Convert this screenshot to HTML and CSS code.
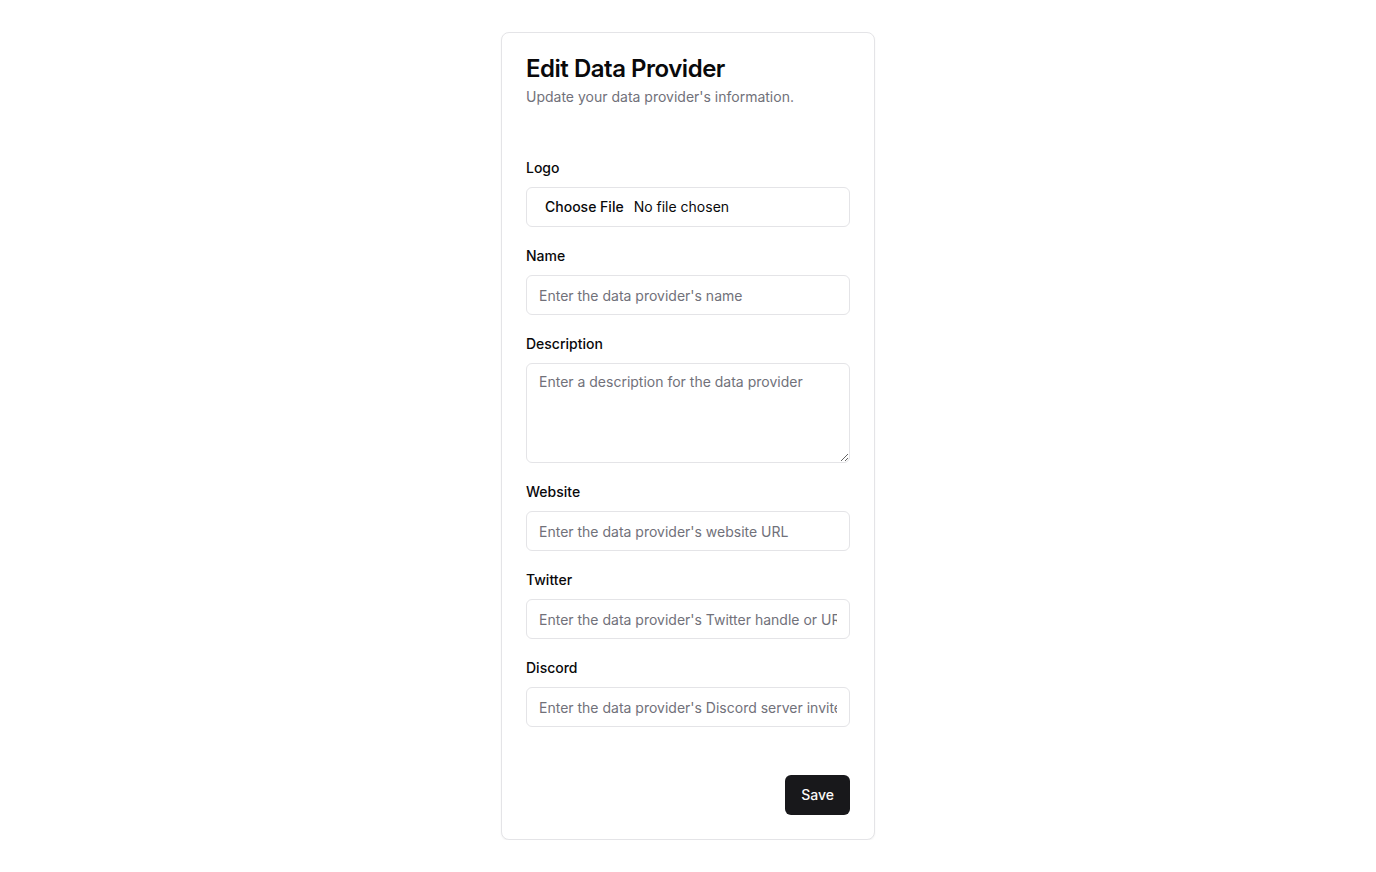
FILE: index.html
```html
<!DOCTYPE html>
<html lang="en">
<head>
<meta charset="utf-8">
<title>Edit Data Provider</title>
<link rel="stylesheet" href="styles.css">
</head>
<body>
<main class="page">
  <section class="card">
    <header class="card-header">
      <h1 class="card-title">Edit Data Provider</h1>
      <p class="card-desc">Update your data provider's information.</p>
    </header>
    <form class="card-content">
      <div class="field">
        <label class="label" for="logo">Logo</label>
        <input class="input file" id="logo" type="file">
      </div>
      <div class="field">
        <label class="label" for="name">Name</label>
        <input class="input" id="name" type="text" placeholder="Enter the data provider's name">
      </div>
      <div class="field">
        <label class="label" for="desc">Description</label>
        <textarea class="input textarea" id="desc" placeholder="Enter a description for the data provider"></textarea>
      </div>
      <div class="field">
        <label class="label" for="web">Website</label>
        <input class="input" id="web" type="text" placeholder="Enter the data provider's website URL">
      </div>
      <div class="field">
        <label class="label" for="tw">Twitter</label>
        <input class="input" id="tw" type="text" placeholder="Enter the data provider's Twitter handle or URL">
      </div>
      <div class="field">
        <label class="label" for="dc">Discord</label>
        <input class="input" id="dc" type="text" placeholder="Enter the data provider's Discord server invite link">
      </div>
    </form>
    <footer class="card-footer">
      <button class="btn" type="button">Save</button>
    </footer>
  </section>
</main>
</body>
</html>
```

FILE: styles.css
```css
* {
  box-sizing: border-box;
}

html, body {
  margin: 0;
  padding: 0;
  background: #ffffff;
  font-family: Inter, "Liberation Sans", sans-serif;
  color: #09090b;
}

.page {
  display: flex;
  justify-content: center;
  padding-top: 32px;
}

.card {
  width: 374px;
  border: 1px solid #e4e4e7;
  border-radius: 8px;
  background: #ffffff;
  box-shadow: 0 1px 2px 0 rgba(0, 0, 0, 0.05);
  display: flex;
  flex-direction: column;
}

.card-header {
  padding: 24px 24px 24px;
  display: flex;
  flex-direction: column;
  gap: 6px;
}

.card-title {
  margin: 0;
  font-size: 24px;
  line-height: 24px;
  font-weight: 600;
  letter-spacing: -0.48px;
}

.card-desc {
  margin: 0;
  font-size: 14px;
  line-height: 20px;
  color: #71717a;
}

.card-content {
  padding: 30px 24px 24px;
  display: flex;
  flex-direction: column;
  gap: 22px;
  margin: 0;
}

.field {
  display: flex;
  flex-direction: column;
  gap: 12px;
}

.label {
  font-size: 14px;
  line-height: 14px;
  font-weight: 500;
  color: #09090b;
}

.input {
  display: block;
  width: 100%;
  height: 40px;
  border: 1px solid #e4e4e7;
  border-radius: 6px;
  background: #ffffff;
  padding: 8px 12px;
  font-family: Inter, "Liberation Sans", sans-serif;
  font-size: 14px;
  line-height: 20px;
  color: #09090b;
  outline: none;
}

.input::placeholder {
  color: #71717a;
}

.file {
  padding: 9px 12px;
}

.file::file-selector-button {
  border: 0;
  background: transparent;
  font-family: Inter, "Liberation Sans", sans-serif;
  font-size: 14px;
  font-weight: 500;
  color: #09090b;
  padding: 1px 6px;
  margin: 0 4px 0 0;
}

.textarea {
  height: 100px;
  resize: vertical;
}

.card-footer {
  display: flex;
  justify-content: flex-end;
  padding: 24px;
}

.btn {
  height: 40px;
  padding: 0 16px 2px;
  border: 0;
  border-radius: 6px;
  background: #18181b;
  color: #fafafa;
  font-family: Inter, "Liberation Sans", sans-serif;
  font-size: 14px;
  font-weight: 500;
}
```
